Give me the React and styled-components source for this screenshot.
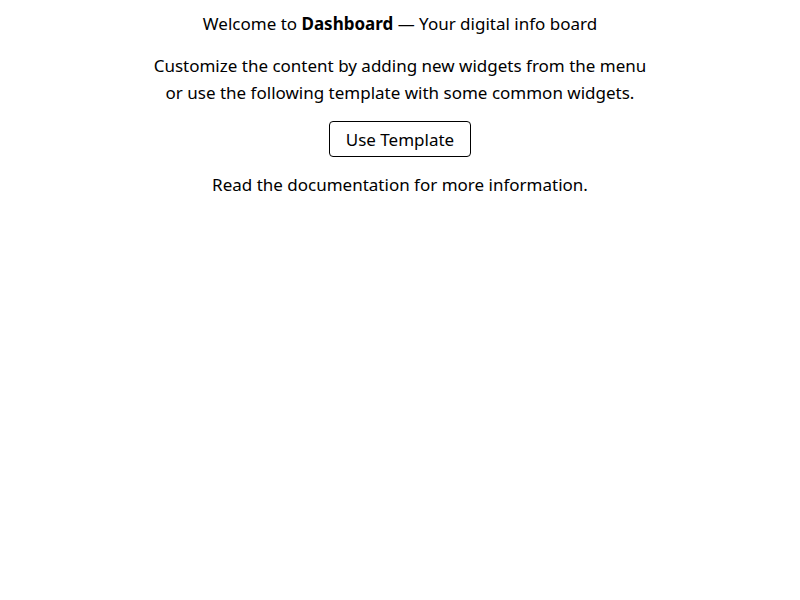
import React from 'react';
import styled, { createGlobalStyle } from 'styled-components';

const GlobalStyle = createGlobalStyle`
  body {
    margin: 0;
    background: #ffffff;
    color: #000000;
    font-family: "Noto Sans", "Open Sans", sans-serif;
  }
`;

const Welcome = styled.div`
  display: flex;
  flex-direction: column;
  align-items: center;
  text-align: center;
  padding-top: 10px;
  font-size: 17px;
  line-height: 27px;
`;

const Title = styled.p`
  margin: 0 0 15px;
`;

const Text = styled.p`
  margin: 0;
`;

const TemplateButton = styled.button`
  margin: 15px 0 14px;
  height: 36px;
  padding: 0 16px;
  background: #ffffff;
  border: 1px solid #000000;
  border-radius: 4px;
  font-family: inherit;
  font-size: 17px;
  color: #000000;
  cursor: pointer;
`;

export default function App() {
  return (
    <>
      <GlobalStyle />
      <Welcome>
        <Title>
          Welcome to <b>Dashboard</b> — Your digital info board
        </Title>
        <Text>
          Customize the content by adding new widgets from the menu
          <br />
          or use the following template with some common widgets.
        </Text>
        <TemplateButton>Use Template</TemplateButton>
        <Text>Read the documentation for more information.</Text>
      </Welcome>
    </>
  );
}
